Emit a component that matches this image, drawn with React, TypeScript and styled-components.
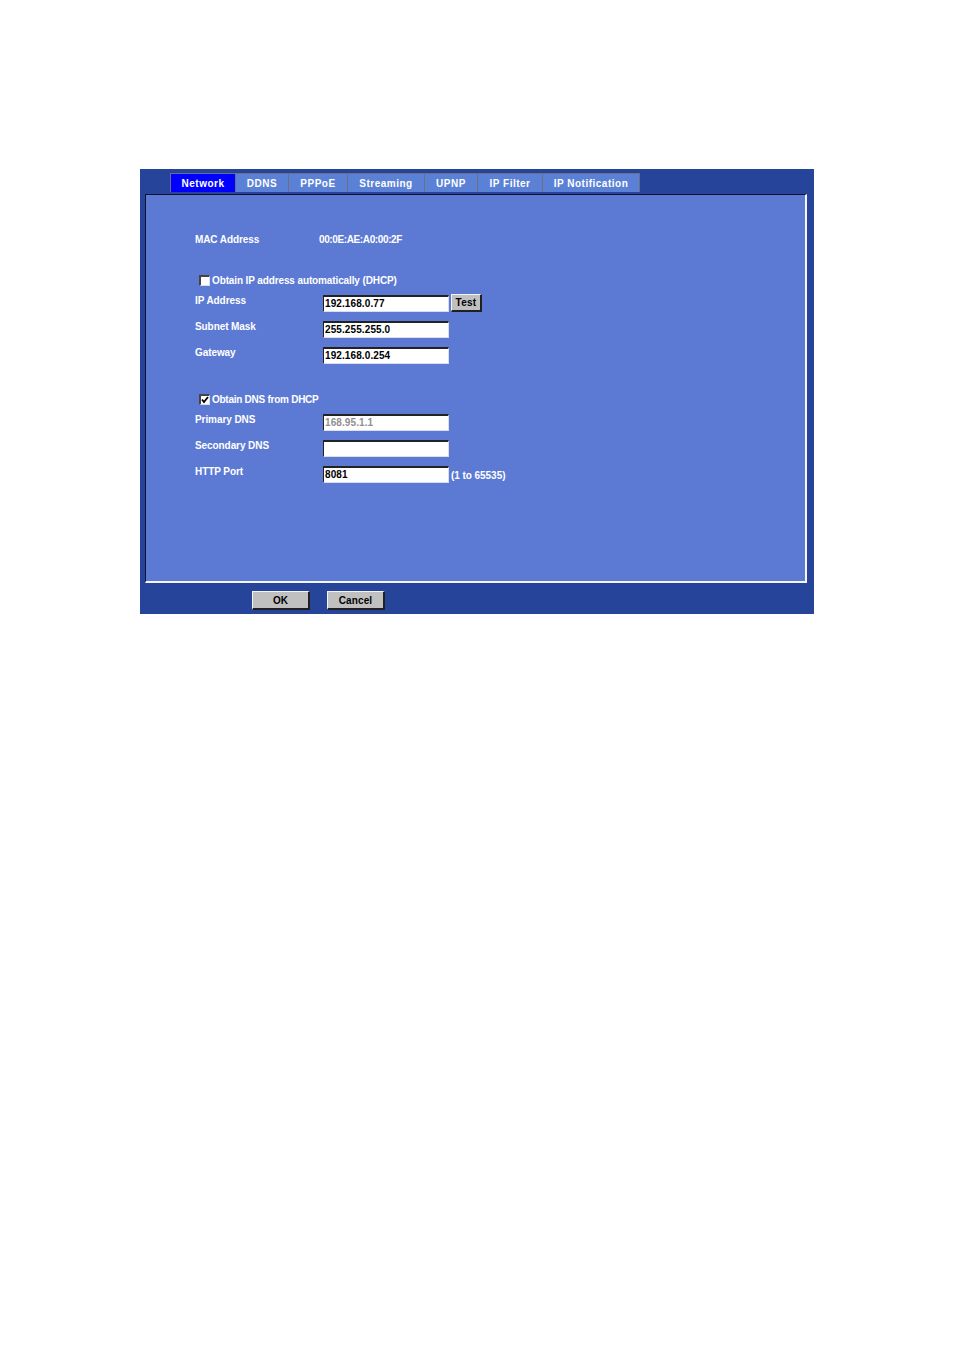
import React from "react";
import styled, { createGlobalStyle } from "styled-components";

const Global = createGlobalStyle`
  html, body { margin: 0; padding: 0; background: #fff; }
  body { font-family: "Liberation Sans", Arial, sans-serif; }
`;

const Page = styled.div`
  width: 954px;
  height: 1351px;
  padding: 169px 0 0 140px;
  box-sizing: border-box;
`;

const Frame = styled.div`
  width: 674px;
  height: 445px;
  background: #26459a;
  display: flex;
  flex-direction: column;
`;

const TabBar = styled.div`
  height: 25px;
  box-sizing: border-box;
  padding: 4px 0 0 30px;
  display: flex;
`;

const Tab = styled.div<{ $active?: boolean; $w: number }>`
  width: ${(p) => p.$w}px;
  height: 19px;
  box-sizing: border-box;
  background: ${(p) => (p.$active ? "#0000ff" : "#5b81d6")};
  border-top: 1px solid #6a6f85;
  border-right: 1px solid #6a6f85;
  border-left: ${(p) => (p.$active ? "1px solid #6a6f85" : "0")};
  color: #fff;
  font-size: 10px;
  font-weight: 700;
  letter-spacing: 0.5px;
  padding-top: 2px;
  line-height: 16px;
  text-align: center;
`;

const Panel = styled.div`
  margin-left: 5px;
  width: 662px;
  height: 389px;
  box-sizing: border-box;
  background: #5c7ad4;
  border-style: solid;
  border-width: 1px 2px 2px 1px;
  border-color: #101030 #f4f6fc #f4f6fc #101030;
  padding: 39px 0 0 49px;
  color: #fff;
  font-size: 10px;
  font-weight: 700;
`;

const InfoRow = styled.div`
  display: flex;
  height: 12px;
  line-height: 12px;
  letter-spacing: -0.1px;
`;

const InfoLabel = styled.div`
  width: 124px;
`;

const InfoValue = styled.span`
  letter-spacing: -0.38px;
`;

const CheckRow = styled.label<{ $top: number; $tight?: boolean }>`
  display: flex;
  align-items: center;
  margin: ${(p) => p.$top}px 0 7px 4px;
  height: 12px;
  line-height: 12px;
  letter-spacing: ${(p) => (p.$tight ? "-0.26px" : "-0.12px")};
`;

const Check = styled.span`
  width: 11px;
  height: 11px;
  box-sizing: border-box;
  margin: -2px 2px 0 0;
  background: #fff;
  border-style: solid;
  border-width: 2px 1px 1px 2px;
  border-color: #444 #ddd #ddd #444;
  display: flex;
  svg { display: block; }
`;

const Row = styled.div`
  display: grid;
  grid-template-columns: 128px auto 1fr;
  height: 26px;
  align-items: start;
`;

const RowLabel = styled.div`
  line-height: 12px;
  padding-top: 1px;
  letter-spacing: -0.08px;
`;

const Field = styled.div<{ $muted?: boolean }>`
  width: 126px;
  height: 17px;
  margin-top: 1px;
  box-sizing: border-box;
  background: #fff;
  border-style: solid;
  border-width: 2px 1px 1px 1px;
  border-color: #222 #dde #dde #222;
  color: ${(p) => (p.$muted ? "#909090" : "#000")};
  line-height: 14px;
  padding-left: 1px;
  letter-spacing: 0.1px;
`;

const Side = styled.div`
  display: flex;
  margin-left: 2px;
  align-items: center;
  height: 18px;
`;

const Hint = styled.span`
  margin-top: 2px;
  letter-spacing: -0.05px;
`;

const TestButton = styled.div`
  width: 31px;
  height: 18px;
  box-sizing: border-box;
  background: #c0c0c0;
  border-style: solid;
  border-width: 1px 2px 2px 1px;
  border-color: #f4f4f4 #202020 #202020 #f4f4f4;
  color: #000;
  font-size: 10px;
  font-weight: 700;
  letter-spacing: 0.3px;
  text-align: center;
  line-height: 15px;
`;

const FooterButton = styled.div`
  width: 58px;
  height: 19px;
  box-sizing: border-box;
  background: #c0c0c0;
  border-style: solid;
  border-width: 1px 2px 2px 1px;
  border-color: #f4f4f4 #202020 #202020 #f4f4f4;
  color: #000;
  font-size: 10px;
  font-weight: 700;
  letter-spacing: 0.1px;
  text-align: center;
  padding-top: 2px;
  line-height: 14px;
`;

const Footer = styled.div`
  display: flex;
  gap: 17px;
  padding: 8px 0 0 112px;
`;

const tabs: [string, number][] = [
  ["Network", 66],
  ["DDNS", 53],
  ["PPPoE", 59],
  ["Streaming", 77],
  ["UPNP", 53],
  ["IP Filter", 65],
  ["IP Notification", 97],
];

function Mark() {
  return (
    <svg width="8" height="8" viewBox="0 0 8 8">
      <path d="M1 3.5 L3 6 L7 1" fill="none" stroke="#000" strokeWidth="1.8" />
    </svg>
  );
}

export default function App() {
  return (
    <Page>
      <Global />
      <Frame>
        <TabBar>
          {tabs.map(([name, w], i) => (
            <Tab key={name} $w={w} $active={i === 0}>
              {name}
            </Tab>
          ))}
        </TabBar>
        <Panel>
          <InfoRow>
            <InfoLabel>MAC Address</InfoLabel>
            <InfoValue>00:0E:AE:A0:00:2F</InfoValue>
          </InfoRow>
          <CheckRow $top={29}>
            <Check />
            Obtain IP address automatically (DHCP)
          </CheckRow>
          <Row>
            <RowLabel>IP Address</RowLabel>
            <Field>192.168.0.77</Field>
            <Side>
              <TestButton>Test</TestButton>
            </Side>
          </Row>
          <Row>
            <RowLabel>Subnet Mask</RowLabel>
            <Field>255.255.255.0</Field>
          </Row>
          <Row>
            <RowLabel>Gateway</RowLabel>
            <Field>192.168.0.254</Field>
          </Row>
          <CheckRow $top={22} $tight>
            <Check><Mark /></Check>
            Obtain DNS from DHCP
          </CheckRow>
          <Row>
            <RowLabel>Primary DNS</RowLabel>
            <Field $muted>168.95.1.1</Field>
          </Row>
          <Row>
            <RowLabel>Secondary DNS</RowLabel>
            <Field />
          </Row>
          <Row>
            <RowLabel>HTTP Port</RowLabel>
            <Field>8081</Field>
            <Side>
              <Hint>(1 to 65535)</Hint>
            </Side>
          </Row>
        </Panel>
        <Footer>
          <FooterButton>OK</FooterButton>
          <FooterButton>Cancel</FooterButton>
        </Footer>
      </Frame>
    </Page>
  );
}
